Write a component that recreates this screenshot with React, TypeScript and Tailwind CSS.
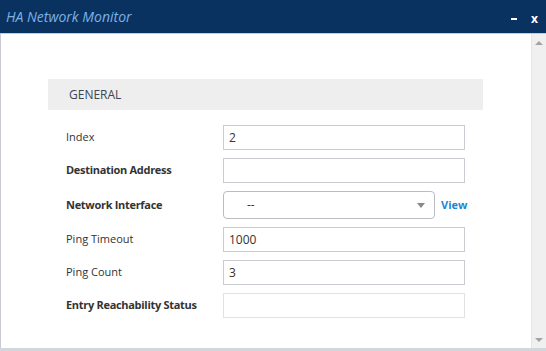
import React from "react";

const font = { fontFamily: '"Open Sans", "Noto Sans", sans-serif' };

interface RowProps {
  label: string;
  bold?: boolean;
  value?: string;
  faint?: boolean;
}

function Label({ text, bold }: { text: string; bold?: boolean }) {
  return (
    <div className={`w-[157px] text-[11px] text-[#333] ${bold ? "font-bold tracking-[-0.3px]" : ""}`}>{text}</div>
  );
}

function InputRow({ label, bold, value, faint }: RowProps) {
  return (
    <div className="flex items-center h-[25px]">
      <Label text={label} bold={bold} />
      <div
        className={`w-[242px] h-[25px] border bg-white flex items-center px-[5px] text-[12px] text-[#333] ${
          faint ? "border-[#e1e1e1]" : "border-[#c9ccd1]"
        }`}
      >
        {value}
      </div>
    </div>
  );
}

export default function App() {
  return (
    <div className="w-[546px] h-[351px] flex flex-col bg-white overflow-hidden" style={font}>
      <div className="h-[33px] bg-[#0a3260] flex items-center justify-between pl-[6px] pr-[8px] border-b border-[#c3cbd6] box-content">
        <span className="italic text-[14px] text-[#7db1e4]">HA Network Monitor</span>
        <div className="flex items-center gap-[14px] pt-[4px]">
          <span className="block w-[6px] h-[2px] bg-white" />
          <span className="text-white font-bold text-[12px] leading-none">x</span>
        </div>
      </div>

      <div className="flex flex-1 min-h-0 border-b-[3px] border-[#d3d6da]">
        <div className="flex-1 border-l border-[#c8ccd2] pl-[47px] pt-[45px]">
          <div className="w-[435px] h-[31px] bg-[#eeeeee] flex items-center pl-[21px] text-[12px] text-[#3c4654]">
            GENERAL
          </div>

          <div className="flex flex-col gap-2 mt-[15px] pl-[18px]">
            <InputRow label="Index" value="2" />
            <InputRow label="Destination Address" bold />
            <div className="flex items-center h-[28px]">
              <Label text="Network Interface" bold />
              <div className="w-[212px] h-[28px] border border-[#b9bcc1] rounded-[4px] flex items-center justify-between pl-[23px] pr-[9px] text-[12px] text-[#333]">
                <span>--</span>
                <span className="w-0 h-0 border-l-[4px] border-r-[4px] border-t-[5px] border-l-transparent border-r-transparent border-t-[#8a8a8a]" />
              </div>
              <span className="ml-[6px] text-[11px] font-bold text-[#1a87d8]">View</span>
            </div>
            <InputRow label="Ping Timeout" value="1000" />
            <InputRow label="Ping Count" value="3" />
            <InputRow label="Entry Reachability Status" bold faint />
          </div>
        </div>

        <div className="w-[15px] bg-[#f0f0f0] border-l border-[#e6e6e6] flex flex-col items-center justify-between pt-[7px] pb-[6px]">
          <span className="w-0 h-0 border-l-[4px] border-r-[4px] border-b-[4px] border-l-transparent border-r-transparent border-b-[#a3a3a3]" />
          <span className="w-0 h-0 border-l-[4px] border-r-[4px] border-t-[4px] border-l-transparent border-r-transparent border-t-[#a3a3a3]" />
        </div>
      </div>
    </div>
  );
}
